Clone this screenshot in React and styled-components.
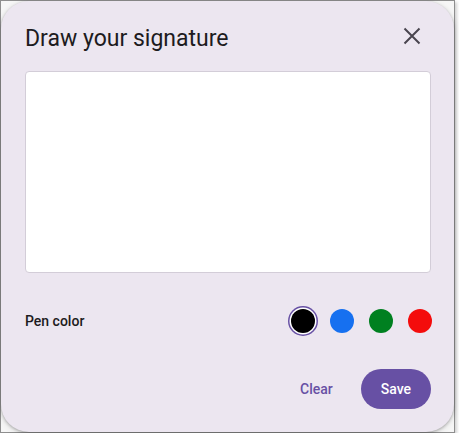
import React, { useState } from 'react';
import styled, { createGlobalStyle } from 'styled-components';

const GlobalStyle = createGlobalStyle`
  html, body {
    margin: 0;
    padding: 0;
    background: #ffffff;
    font-family: Roboto, 'Liberation Sans', sans-serif;
  }
`;

const PEN_COLORS = ['#000000', '#1670f0', '#008020', '#f40c0c'];

const App = () => {
  const [pen, setPen] = useState(PEN_COLORS[0]);

  return (
    <>
      <GlobalStyle />
      <Frame>
        <Dialog>
          <Header>
            <Title>Draw your signature</Title>
            <CloseButton aria-label='Close'>
              <svg width='24' height='24' viewBox='0 0 24 24'>
                <path
                  d='M4.5 4.5 L19.5 19.5 M19.5 4.5 L4.5 19.5'
                  stroke='#49454f'
                  strokeWidth='2'
                  fill='none'
                />
              </svg>
            </CloseButton>
          </Header>
          <Canvas />
          <PenRow>
            <PenLabel>Pen color</PenLabel>
            <Swatches>
              {PEN_COLORS.map((c) => (
                <Swatch
                  key={c}
                  $color={c}
                  $selected={c === pen}
                  onClick={() => setPen(c)}
                />
              ))}
            </Swatches>
          </PenRow>
          <Actions>
            <TextButton>Clear</TextButton>
            <FilledButton>Save</FilledButton>
          </Actions>
        </Dialog>
      </Frame>
    </>
  );
};

const Frame = styled.div`
  box-sizing: border-box;
  width: 455px;
  height: 433px;
  border: 1px solid #8e8e8e;
  background: #f6f6f6;
  box-shadow: 2px 2px 3px rgba(0, 0, 0, 0.18);
  display: flex;
`;

const Dialog = styled.section`
  box-sizing: border-box;
  flex: 1;
  display: flex;
  flex-direction: column;
  padding: 22px 23px 22px 24px;
  background: #ece6f0;
  border-radius: 28px;
  box-shadow: 0 1px 3px rgba(0, 0, 0, 0.25), 0 2px 6px rgba(0, 0, 0, 0.12);
`;

const Header = styled.header`
  display: flex;
  justify-content: space-between;
  align-items: flex-start;
  height: 32px;
  margin-bottom: 16px;
`;

const Title = styled.h2`
  margin: 0;
  font-size: 23px;
  line-height: 32px;
  font-weight: 400;
  color: #1d1b20;
`;

const CloseButton = styled.button`
  display: flex;
  margin: 1px 7px 0 0;
  padding: 0;
  border: none;
  background: none;
  cursor: pointer;
`;

const Canvas = styled.div`
  box-sizing: border-box;
  height: 202px;
  background: #ffffff;
  border: 1px solid #d3cdd8;
  border-radius: 4px;
`;

const PenRow = styled.div`
  display: flex;
  align-items: center;
  justify-content: space-between;
  height: 48px;
  margin-top: 24px;
`;

const PenLabel = styled.span`
  font-size: 14px;
  font-weight: 500;
  color: #1d1b20;
`;

const Swatches = styled.div`
  display: flex;
  gap: 15px;
  margin-right: -1px;
`;

const Swatch = styled.button`
  width: 24px;
  height: 24px;
  padding: 0;
  border: none;
  border-radius: 50%;
  background: ${(p) => p.$color};
  cursor: pointer;
  box-shadow: ${(p) =>
    p.$selected ? '0 0 0 1.5px #ffffff, 0 0 0 3px #6750a4' : 'none'};
`;

const Actions = styled.div`
  display: flex;
  justify-content: flex-end;
  align-items: center;
  gap: 16px;
  margin-top: 24px;
`;

const TextButton = styled.button`
  height: 40px;
  padding: 0 12px;
  border: none;
  border-radius: 20px;
  background: none;
  font-family: inherit;
  font-size: 14px;
  font-weight: 500;
  color: #6750a4;
  cursor: pointer;
`;

const FilledButton = styled(TextButton)`
  padding: 0 20px;
  background: #6750a4;
  color: #ffffff;
`;

export default App;
